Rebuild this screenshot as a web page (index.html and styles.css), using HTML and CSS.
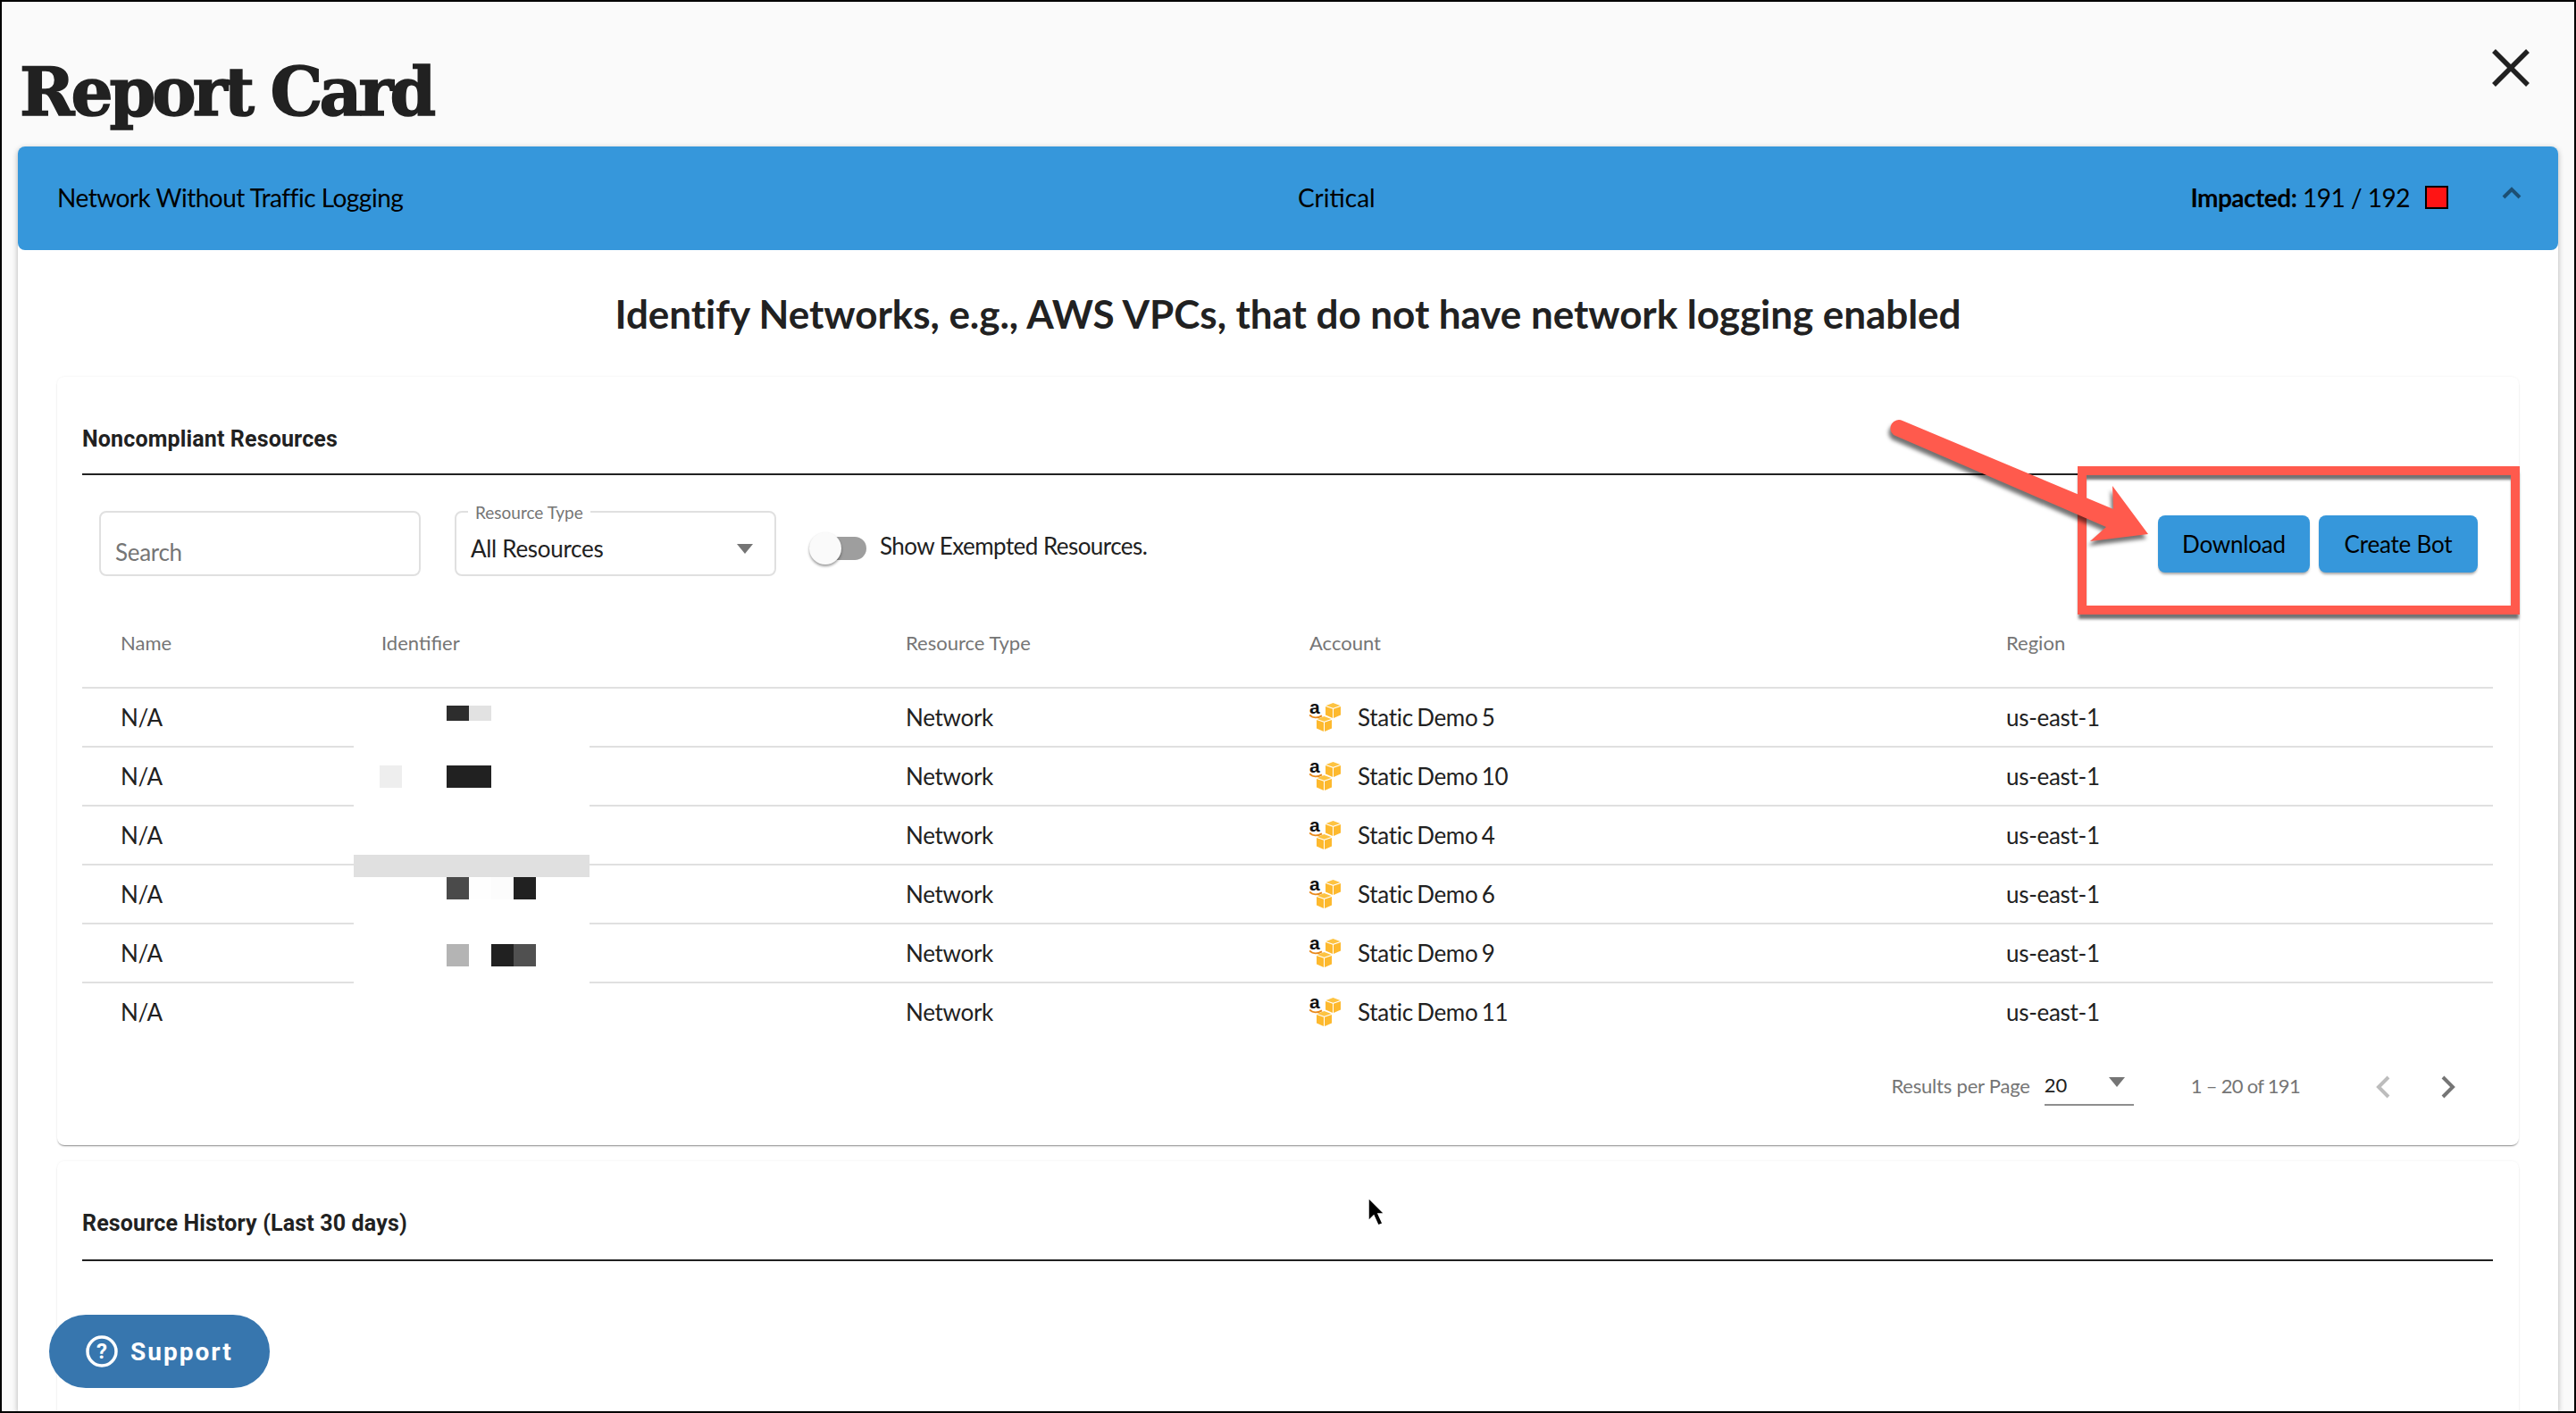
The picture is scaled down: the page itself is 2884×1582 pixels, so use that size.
FILE: index.html
```html
<!DOCTYPE html>
<html lang="en">
<head>
<meta charset="utf-8">
<title>Report Card</title>
<link rel="stylesheet" href="styles.css">
</head>
<body>
<div class="frame">
  <svg width="0" height="0" class="defs">
    <defs>
      <symbol id="aws" viewBox="0 0 35 32">
        <text x="0" y="12" class="aws-a">a</text>
        <path d="M0 13.500c3.500 3.500 9 3.800 14 .8" class="aws-smile"/>
        <path d="M18.500 3 26.500 0l8 3-8 2.800z" fill="#fdc341"/>
        <path d="M18 4l8 2.800V17l-8-3.500z" fill="#fdb92e"/>
        <path d="M27 6.800 35 4v9.500L27 17z" fill="#fdb92e"/>
        <path d="M8.500 18 16.500 15l8 3-8 2.800z" fill="#fdc341"/>
        <path d="M8 19l8 2.800V32l-8-3.500z" fill="#fdb92e"/>
        <path d="M17 21.800 25 19v9.500L17 32z" fill="#fdb92e"/>
      </symbol>
    </defs>
  </svg>

  <header class="top">
    <h1 class="title">Report Card</h1>
    <svg class="close" width="42" height="42" viewBox="0 0 42 42"><path d="M2 2l38 38M40 2 2 40"/></svg>
  </header>

  <main class="panel">
    <div class="bar">
      <span class="bar-name">Network Without Traffic Logging</span>
      <span class="bar-sev">Critical</span>
      <span class="bar-imp"><b>Impacted:</b> 191 / 192</span>
      <span class="sq"></span>
      <svg class="chev-up" width="22" height="14" viewBox="0 0 22 14"><path d="M2 12l9-9 9 9"/></svg>
    </div>

    <h2 class="lead">Identify Networks, e.g., AWS VPCs, that do not have network logging enabled</h2>

    <section class="card first">
      <h3 class="card-title">Noncompliant Resources</h3>
      <div class="toolbar">
        <div class="field"><span class="ph">Search</span></div>
        <div class="field select">
          <span class="legend">Resource Type</span>
          <span class="val">All Resources</span>
          <span class="tri"></span>
        </div>
        <span class="toggle"><span class="thumb"></span></span>
        <span class="toggle-label">Show Exempted Resources.</span>
        <div class="actions">
          <button class="btn dl">Download</button>
          <button class="btn cb">Create Bot</button>
        </div>
      </div>

      <div class="table">
        <div class="row head"><span>Name</span><span>Identifier</span><span>Resource Type</span><span>Account</span><span>Region</span></div>
        <div class="row"><span>N/A</span><span></span><span>Network</span><span class="acct"><svg class="aws" width="35" height="32"><use href="#aws"/></svg>Static Demo 5</span><span>us-east-1</span></div>
        <div class="row"><span>N/A</span><span></span><span>Network</span><span class="acct"><svg class="aws" width="35" height="32"><use href="#aws"/></svg>Static Demo 10</span><span>us-east-1</span></div>
        <div class="row"><span>N/A</span><span></span><span>Network</span><span class="acct"><svg class="aws" width="35" height="32"><use href="#aws"/></svg>Static Demo 4</span><span>us-east-1</span></div>
        <div class="row"><span>N/A</span><span></span><span>Network</span><span class="acct"><svg class="aws" width="35" height="32"><use href="#aws"/></svg>Static Demo 6</span><span>us-east-1</span></div>
        <div class="row"><span>N/A</span><span></span><span>Network</span><span class="acct"><svg class="aws" width="35" height="32"><use href="#aws"/></svg>Static Demo 9</span><span>us-east-1</span></div>
        <div class="row last"><span>N/A</span><span></span><span>Network</span><span class="acct"><svg class="aws" width="35" height="32"><use href="#aws"/></svg>Static Demo 11</span><span>us-east-1</span></div>

        <div class="redact">
          <div class="mrow m1"><i class="off4"></i><i class="c2d"></i><i class="ce2"></i></div>
          <div class="mrow m2"><i class="off1"></i><i class="cee"></i><i class="off2"></i><i class="c21"></i><i class="c21"></i></div>
          <div class="mrow m3 bar-grey"></div>
          <div class="mrow"><i class="off4"></i><i class="c4a"></i><i class="cfe"></i><i class="cfc"></i><i class="c21"></i></div>
          <div class="mrow m5"><i class="off4"></i><i class="cb4"></i><i class="off1"></i><i class="c21"></i><i class="c50"></i></div>
        </div>
      </div>

      <div class="pager">
        <span class="muted results">Results per Page</span>
        <span class="per"><span>20</span><span class="tri small"></span></span>
        <span class="muted range">1 – 20 of 191</span>
        <svg class="pg prev" width="18" height="26" viewBox="0 0 18 26"><path d="M15 2 4 13l11 11"/></svg>
        <svg class="pg next" width="18" height="26" viewBox="0 0 18 26"><path d="M3 2l11 11L3 24"/></svg>
      </div>
    </section>

    <section class="card second">
      <h3 class="card-title">Resource History (Last 30 days)</h3>
    </section>
  </main>

  <button class="support">
    <svg width="36" height="36" viewBox="0 0 36 36"><circle cx="18" cy="18" r="16" class="ring"/><text x="18" y="26" class="qm">?</text></svg>
    <span>Support</span>
  </button>

  <div class="callout"></div>
  <svg class="arrow" width="320" height="170" viewBox="0 0 320 170">
    <path class="arrow-shadow" d="M20 1 256 100 255 74 295 128 230 136 248 120 10 17A9.500 9.500 0 0 1 20 1z"/>
    <path class="arrow-main" d="M20 1 256 100 255 74 295 128 230 136 248 120 10 17A9.500 9.500 0 0 1 20 1z"/>
  </svg>
  <svg class="cursor" width="20" height="36" viewBox="0 0 20 36"><path d="M2 1v26l6-6 5 11 5-2-5-11h7z" fill="#000" stroke="#fff" stroke-width="1.500"/></svg>
</div>
</body>
</html>
```
FILE: styles.css
```css
* { box-sizing: border-box; }
html, body { margin: 0; padding: 0; }
body { font-family: "Lato", "Liberation Sans", sans-serif; color: #212121; }
.defs { position: absolute; }
.frame {
  position: relative;
  width: 2884px;
  height: 1582px;
  overflow: hidden;
  background: #fafafa;
  border: 2px solid #000;
}
.top {
  display: flex;
  justify-content: space-between;
  height: 162px;
  padding: 53px 50px 0 20px;
}
.title {
  margin: 0;
  font-family: "DejaVu Serif", serif;
  font-weight: 700;
  font-size: 74px;
  line-height: 96px;
  letter-spacing: -4px;
  -webkit-text-stroke: 1.500px #212121;
}
.close { fill: none; stroke: #212121; stroke-width: 5.500px; }
.panel {
  margin: 0 18px;
  height: 1416px;
  background: #fff;
  box-shadow: 0 2px 6px rgba(0,0,0,.3);
  border-radius: 8px 8px 0 0;
}
.bar {
  display: flex;
  align-items: center;
  height: 116px;
  padding: 0 41px 3px 44px;
  background: #3697db;
  border-radius: 8px;
  font-size: 28px;
  color: #000;
}
.bar-name { width: 1389px; letter-spacing: -.5px; }
.bar-sev { flex: 1; }
.bar-imp { letter-spacing: -.5px; }
.bar-imp b { font-weight: 700; }
.sq { width: 26px; height: 26px; margin-left: 17px; background: #ff1414; border: 2px solid #000; }
.chev-up { margin-left: 60px; margin-top: -9px; fill: none; stroke: #1d4f73; stroke-width: 4px; }
.lead {
  margin: 0;
  padding-top: 44px;
  height: 142px;
  text-align: center;
  font-size: 44px;
  line-height: 54px;
  font-weight: 700;
  letter-spacing: -.05px;
  color: #212121;
}
.card {
  margin: 0 44px;
  padding: 0 29px 0 28px;
  background: #fff;
  border-radius: 8px;
  box-shadow: 0 2px 2px -1px rgba(0,0,0,.45), 0 0 3px rgba(0,0,0,.06);
}
.first { height: 860px; }
.second { margin-top: 18px; height: 400px; }
.card-title {
  margin: 0;
  height: 110px;
  padding-top: 52px;
  border-bottom: 2px solid #212121;
  font-family: "Roboto", sans-serif;
  font-weight: 700;
  font-size: 25px;
  line-height: 36px;
  letter-spacing: .15px;
  color: #212121;
}
.second .card-title { height: 112px; }
.toolbar {
  display: flex;
  align-items: center;
  height: 73px;
  margin-top: 40px;
  padding: 0 17px 0 19px;
}
.field {
  position: relative;
  width: 360px;
  height: 73px;
  padding: 26px 16px 0;
  border: 2px solid #e0e0e0;
  border-radius: 8px;
  font-size: 26px;
  line-height: 36px;
  letter-spacing: -.3px;
}
.ph { color: #757575; }
.select { margin-left: 38px; display: flex; justify-content: space-between; padding-top: 22px; }
.legend {
  position: absolute;
  left: 13px;
  top: -12px;
  padding: 0 8px;
  background: #fff;
  font-size: 19px;
  line-height: 24px;
  letter-spacing: 0;
  color: #757575;
}
.val { color: #212121; }
.tri {
  width: 0; height: 0;
  margin: 13px 8px 0 0;
  border: 9px solid transparent;
  border-bottom: 0;
  border-top: 11px solid #757575;
}
.toggle { position: relative; width: 60px; height: 26px; margin: 10px 0 0 41px; background: #9e9e9e; border-radius: 13px; }
.thumb {
  position: absolute; left: -4px; top: -5px;
  width: 36px; height: 36px;
  background: #fafafa; border-radius: 50%;
  box-shadow: 0 2px 3px rgba(0,0,0,.4);
}
.toggle-label { margin: 4px 0 0 15px; font-size: 26px; letter-spacing: -.55px; color: #212121; }
.actions { display: flex; gap: 10px; margin-left: auto; }
.btn {
  height: 64px;
  padding: 1px 0 0;
  border: 0;
  border-radius: 8px;
  background: #3697db;
  color: #000;
  font-family: inherit;
  font-size: 26px;
  letter-spacing: -.2px;
  box-shadow: 0 3px 3px -1px rgba(0,0,0,.35);
}
.dl { width: 170px; }
.cb { width: 178px; }
.table { position: relative; }
.row {
  display: grid;
  grid-template-columns: 292px 587px 452px 780px 1fr;
  align-items: center;
  height: 66px;
  padding-left: 43px;
  border-bottom: 2px solid #e0e0e0;
  font-size: 26px;
  letter-spacing: -.3px;
  color: #212121;
}
.row.head {
  height: 126px;
  padding-top: 25px;
  font-size: 22px;
  letter-spacing: 0;
  color: #757575;
}
.row.last { border-bottom: 0; height: 64px; }
.acct { display: flex; align-items: center; gap: 19px; word-spacing: -2px; }
.aws-a { font-family: "Liberation Sans", sans-serif; font-weight: 700; font-size: 21px; fill: #111; }
.aws-smile { fill: none; stroke: #e8891c; stroke-width: 2px; }
.redact {
  position: absolute;
  left: 304px;
  top: 128px;
  width: 264px;
  height: 394px;
  padding-top: 17px;
  background: #fff;
}
.mrow { display: flex; height: 25px; padding-left: 4px; }
.mrow i { width: 25px; height: 100%; display: block; }
.m1 { height: 17px; }
.m2 { margin-top: 50px; }
.m3 { margin-top: 75px; }
.m5 { margin-top: 50px; }
.bar-grey { background: #e0e0e0; }
.mrow .off1 { width: 25px; }
.mrow .off2 { width: 50px; }
.mrow .off4 { width: 100px; }
.c2d { background: #2d2d2d; }
.ce2 { background: #e2e2e2; }
.cee { background: #eee; }
.c21 { background: #212121; }
.c4a { background: #4a4a4a; }
.cfe { background: #fefefe; }
.cfc { background: #fcfcfc; }
.cb4 { background: #b4b4b4; }
.c50 { background: #505050; }
.pager {
  display: flex;
  align-items: center;
  justify-content: flex-end;
  height: 100px;
  padding: 0 41px 0 0;
  margin-top: 0;
  font-size: 22px;
}
.muted { color: #757575; }
.results { letter-spacing: -.2px; }
.per {
  display: flex;
  justify-content: space-between;
  width: 100px;
  height: 38px;
  margin: 8px 0 0 16px;
  border-bottom: 2px solid #8e8e8e;
  color: #212121;
  line-height: 30px;
}
.tri.small { margin: 6px 10px 0 0; }
.range { margin-left: 64px; letter-spacing: -.7px; }
.pg { fill: none; stroke-width: 4px; margin-top: 4px; }
.prev { stroke: #bdbdbd; margin-left: 84px; }
.next { stroke: #757575; margin-left: 55px; }
.support {
  position: absolute;
  left: 53px;
  top: 1470px;
  width: 247px;
  height: 82px;
  padding: 0 0 0 41px;
  display: flex;
  align-items: center;
  gap: 14px;
  border: 0;
  border-radius: 41px;
  background: #3776ae;
  color: #fff;
  font-family: "Roboto", sans-serif;
  font-weight: 700;
  font-size: 28px;
  letter-spacing: 2px;
}
.ring { fill: none; stroke: #fff; stroke-width: 3.500px; }
.qm { font-family: "Roboto", sans-serif; font-size: 24px; font-weight: 700; fill: #fff; text-anchor: middle; letter-spacing: 0; }
.callout {
  position: absolute;
  left: 2324px;
  top: 520px;
  width: 495px;
  height: 166px;
  border: 10px solid #ff5a4d;
  box-shadow: 0 6px 3px -1px rgba(0,0,0,.55), inset 0 6px 3px -1px rgba(0,0,0,.55);
}
.arrow { position: absolute; left: 2108px; top: 468px; }
.arrow-main { fill: #ff5a4d; }
.arrow-shadow { fill: rgba(0,0,0,.55); filter: blur(2px); transform: translate(-2px, 5px); }
.cursor { position: absolute; left: 1528px; top: 1338px; }
```
